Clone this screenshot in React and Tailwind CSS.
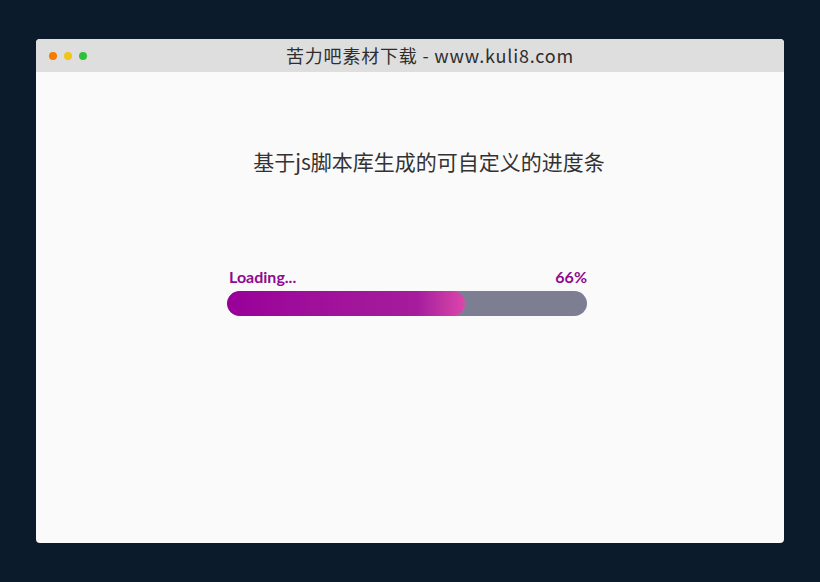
import React from "react";

const progress = 66;

export default function App() {
  return (
    <div className="w-[820px] h-[582px] bg-[#0b1b2b] pt-[39px] pl-[36px]">
      <div className="w-[748px] h-[504px] rounded-[4px] overflow-hidden bg-[#fafafa] flex flex-col">
        <div className="h-[33px] bg-[#dedede] flex items-center relative">
          <div className="flex items-center gap-[7px] pl-[13px]">
            <span className="w-[8px] h-[8px] rounded-full bg-[#f57c00]" />
            <span className="w-[8px] h-[8px] rounded-full bg-[#f0c419]" />
            <span className="w-[8px] h-[8px] rounded-full bg-[#2fc13a]" />
          </div>
          <div
            className="absolute inset-0 flex items-center justify-center text-[18px] tracking-[0.8px] text-[#2e2e2e] pl-[40px]"
            style={{ fontFamily: '"Noto Sans CJK SC", "Noto Sans", sans-serif' }}
          >
            苦力吧素材下载 - www.kuli8.com
          </div>
        </div>

        <div className="flex-1 flex flex-col items-center">
          <h1
            className="mt-[73px] text-[21px] leading-[32px] text-[#333] pl-[38px]"
            style={{ fontFamily: '"Noto Sans CJK SC", "Noto Sans", sans-serif' }}
          >
            基于js脚本库生成的可自定义的进度条
          </h1>

          <div className="mt-[90px] w-[360px] mr-[6px]" style={{ fontFamily: "Lato, sans-serif" }}>
            <div className="flex justify-between items-end pl-[2px] text-[16px] font-bold text-[#8e0a8e] leading-[20px]">
              <span>Loading...</span>
              <span>{progress}%</span>
            </div>
            <div className="mt-[4px] h-[25px] rounded-full bg-[#7e7e92] overflow-hidden">
              <div
                className="h-full rounded-full bg-gradient-to-r from-[#990099] via-[#a61c9c] via-80% to-[#dc45ab]"
                style={{ width: `${progress}%` }}
              />
            </div>
          </div>
        </div>
      </div>
    </div>
  );
}
